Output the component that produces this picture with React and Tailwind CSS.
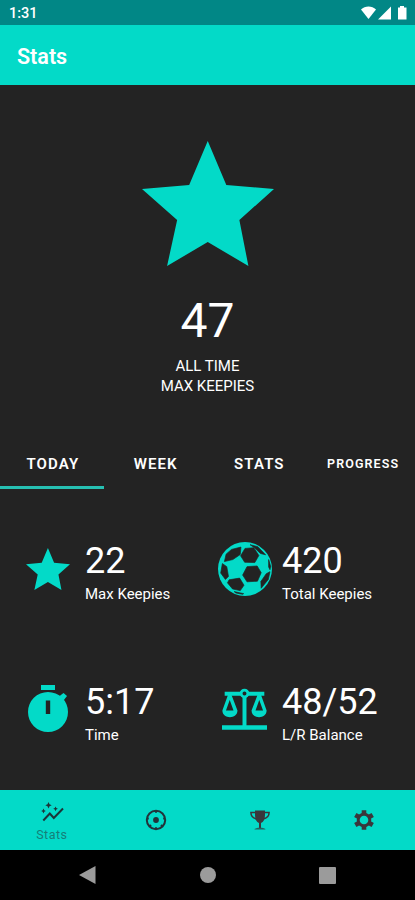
import React from 'react'

const STAR = '65.5,0 84,44 131.5,48 97,79 106,125 65.5,101 25,125 35,79 0,48 47,44'

const StarIcon = ({ className }) => (
  <svg viewBox="0 0 131.5 125" preserveAspectRatio="none" className={className} fill="currentColor">
    <polygon points={STAR} />
  </svg>
)

const BallIcon = () => (
  <svg viewBox="0 0 160 160" className="h-[54px] w-[54px]">
    <circle cx="80" cy="80" r="80" fill="currentColor" />
    <g fill="#232323" stroke="#232323" strokeWidth="2" strokeLinejoin="round">
      <path d="M80 19L106 17L121 40L109 61L79 60L67 41Z" />
      <path d="M86 73L116 71L128 91L117 116L86 118L73 98Z" />
      <path d="M24 36L40 22L68 15L66 37L44 52L19 58Z" />
      <path d="M13 64L26 73L31 102L22 111L8 92Z" />
      <path d="M33 112L64 107L77 128L66 144L43 139L28 121Z" />
      <path d="M95 8L118 14L141 38L126 34L108 17Z" />
      <path d="M143 94L154 88L149 111L128 137L127 117Z" />
      <path d="M150 52L156 72L154 82L150 74Z" />
      <path d="M48 147L76 153L73 155L53 151Z" />
    </g>
  </svg>
)

const TimerIcon = () => (
  <svg viewBox="0 0 40 47" className="h-[47px] w-10" fill="currentColor">
    <path d="M13 0h14v5H13z" />
    <path d="M31 11.5l4.500-3.500 3.500 3-3.500 4.500z" />
    <path fillRule="evenodd" d="M20 7a20 20 0 1 1 0 40 20 20 0 0 1 0-40zm-2.200 8.500V29h4.400V15.500z" />
  </svg>
)

const ScalesIcon = () => (
  <svg viewBox="0 0 45.400 42" className="h-[42px] w-[45px]" fill="currentColor">
    <path d="M2.700 3.600h40v4h-40zM20.700 9h4v29h-4zM0 37.500h45.400V42H0z" />
    <circle cx="22.700" cy="5.300" r="3.400" fill="#232323" stroke="currentColor" strokeWidth="2.800" />
    <path fillRule="evenodd" d="M6 7h3.600l6 15.500c0 9-15.200 9-15.200 0zM7.800 12L4 22.500h7.600z" />
    <path fillRule="evenodd" d="M35.800 7h3.600l5.600 15.500c0 9-15.200 9-15.200 0zM37.600 12l-3.800 10.500h7.600z" />
  </svg>
)

const InsightsIcon = () => (
  <svg viewBox="0 0 24 20" className="h-5 w-6" fill="#1d3438">
    <path d="M8.500 0l1 2.200 2.200 1-2.200 1-1 2.200-1-2.200-2.200-1 2.200-1z" />
    <path d="M15.500 4.500l.8 1.600 1.600.7-1.600.8-.8 1.600-.7-1.600-1.600-.8 1.600-.7z" />
    <path d="M3.500 6.500l.8 1.800 1.500.7-1.500.8-.8 1.800-.8-1.800L1.200 9l1.500-.7z" />
    <path d="M3.300 18.500l6.500-7 4 4.500L23 6.500" fill="none" stroke="#1d3438" strokeWidth="2" />
  </svg>
)

const TargetIcon = () => (
  <svg viewBox="0 0 22 22" className="h-[22px] w-[22px]" fill="none" stroke="#22333a">
    <circle cx="11" cy="11" r="9.200" strokeWidth="2" />
    <circle cx="11" cy="11" r="2.900" fill="#22333a" stroke="none" />
    <path strokeWidth="2" d="M11 2v1.800M11 18.200V20M2 9.500h1.800M18.200 9.500H20M4.500 17.500l1.500-1.500M17.500 17.500L16 16" />
  </svg>
)

const TrophyIcon = () => (
  <svg viewBox="0 0 20 20" className="h-5 w-5">
    <path d="M5 2.500H.900C.900 6 3 8.300 7 9M15 2.500h4.100C19.100 6 17 8.300 13 9" fill="none" stroke="#3a373c" strokeWidth="1.500" />
    <path d="M5 .5h10V5c0 4.500-1.500 7-4 8V18H9v-5C6.500 12 5 9.500 5 5z" fill="#3a373c" />
    <path d="M4.500 19.500c0-2.200 11-2.200 11 0z" fill="#24615f" />
  </svg>
)

const GearIcon = () => (
  <svg viewBox="0 0 20 20" className="h-5 w-5" fill="none" stroke="#3a373c">
    <circle cx="10" cy="10" r="5.800" strokeWidth="3" />
    <path strokeWidth="4.600" d="M10 .2v3.800M10 16v3.800M1.300 5l3.500 2M15.200 13l3.500 2M1.300 15l3.500-2M15.200 7l3.500-2" />
  </svg>
)

const StatusBar = () => (
  <div className="flex h-[25px] items-center justify-between bg-[#018786] pr-[7px] pl-[9px]">
    <span className="pt-[3px] text-[14.500px] leading-none font-medium">1:31</span>
    <svg viewBox="0 0 48 15" className="h-[15px] w-12" fill="currentColor">
      <path d="M1 4.500C5 .5 12 .5 16 4.500L8.500 14z" />
      <path d="M18 14.500L31 1.500v13z" />
      <path d="M38 2.500h2V1h4v1.500h2.500V14.500H38z" />
    </svg>
  </div>
)

const tabs = [
  { label: 'TODAY', text: 'text-[15px]', active: true },
  { label: 'WEEK', text: 'text-[15px]' },
  { label: 'STATS', text: 'text-[15px]' },
  { label: 'PROGRESS', text: 'text-[12.500px]' },
]

const Stat = ({ icon, value, label, className }) => (
  <div className={`flex ${className}`}>
    {icon}
    <div>
      <div className="pt-px text-[36px] leading-[44px]">{value}</div>
      <div className="mt-px text-[15px] leading-5 whitespace-nowrap">{label}</div>
    </div>
  </div>
)

export default function App() {
  return (
    <div className="flex h-[900px] w-[415px] flex-col bg-[#232323] font-['Roboto',sans-serif] text-white">
      <StatusBar />
      <header className="flex h-[60px] items-center bg-[#03dac8] px-[17px] pt-[3px]">
        <h1 className="text-[21.500px] leading-none font-semibold">Stats</h1>
      </header>

      {/* All time record */}
      <section className="flex h-[355px] flex-col items-center pt-14">
        <StarIcon className="h-[125px] w-[132px] text-[#03dac8]" />
        <div className="mt-[25px] text-[48px] leading-[60px]">47</div>
        <div className="mt-[5px] text-center text-[15px] leading-5">
          ALL TIME
          <br />
          MAX KEEPIES
        </div>
      </section>

      <nav className="grid h-[49px] grid-cols-4">
        {tabs.map(tab => (
          <div
            key={tab.label}
            className={`flex items-center justify-center border-b-[3px] pt-[2px] font-semibold tracking-[1.100px] ${tab.text} ${tab.active ? 'border-[#26bfb2] pl-[2px]' : 'border-transparent'}`}
          >
            {tab.label}
          </div>
        ))}
      </nav>

      <section className="grid h-[301px] grid-cols-[218px_1fr] grid-rows-[141px_1fr] pt-[49px]">
        <Stat
          className="pl-[26px]"
          value="22"
          label="Max Keepies"
          icon={<div className="mt-[10px] w-[59px] text-[#03dac8]"><StarIcon className="h-[42px] w-[44px]" /></div>}
        />
        <Stat
          value="420"
          label="Total Keepies"
          icon={<div className="mt-[4px] w-16 text-[#03dac8]"><BallIcon /></div>}
        />
        <Stat
          className="pl-7"
          value="5:17"
          label="Time"
          icon={<div className="mt-[6px] w-[57px] text-[#03dac8]"><TimerIcon /></div>}
        />
        <Stat
          value="48/52"
          label="L/R Balance"
          icon={<div className="mt-[9px] w-16 pl-1 text-[#03dac8]"><ScalesIcon /></div>}
        />
      </section>

      {/* Bottom tabs */}
      <nav className="grid h-[60px] grid-cols-4 bg-[#03dac8]">
        <div className="flex flex-col items-center pt-3">
          <InsightsIcon />
          <span className="mt-[5px] text-[12.500px] leading-4 tracking-[0.500px] text-[#167f78]">Stats</span>
        </div>
        <div className="flex items-center justify-center"><TargetIcon /></div>
        <div className="flex items-center justify-center pl-px"><TrophyIcon /></div>
        <div className="flex items-center justify-center pl-px"><GearIcon /></div>
      </nav>

      {/* System navigation */}
      <div className="flex h-[50px] items-center justify-between bg-black px-[79px] text-[#9b9b9b]">
        <svg viewBox="0 0 17 18" className="h-[18px] w-[17px]" fill="currentColor">
          <path d="M16.500 0v18L0 9z" />
        </svg>
        <div className="h-4 w-4 rounded-full bg-current" />
        <div className="h-[17px] w-[17px] rounded-[1px] bg-current" />
      </div>
    </div>
  )
}
